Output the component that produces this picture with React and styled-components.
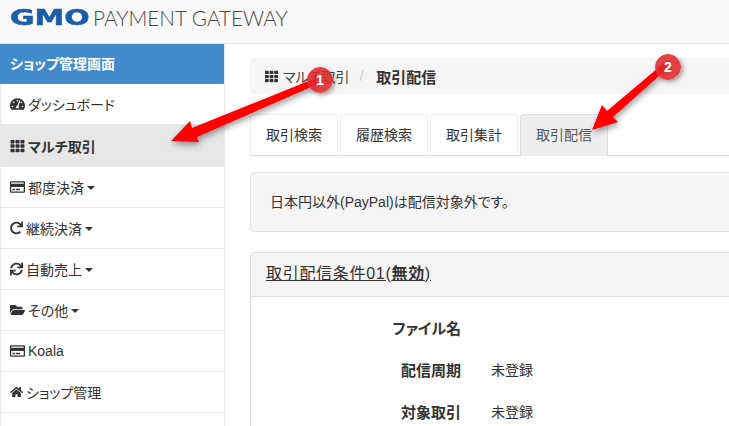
import React from "react";
import styled, { createGlobalStyle } from "styled-components";
import {
  FaTachometerAlt,
  FaTh,
  FaRegCreditCard,
  FaRedo,
  FaSync,
  FaFolderOpen,
  FaHome,
} from "react-icons/fa";

const GlobalStyle = createGlobalStyle`
  html, body {
    margin: 0;
    padding: 0;
    background: #fff;
  }
  body {
    font-family: "Liberation Sans", "Noto Sans CJK JP", sans-serif;
    font-size: 14px;
    color: #333;
    font-feature-settings: "palt";
  }
`;

const Page = styled.div`
  position: relative;
  width: 729px;
  height: 426px;
  overflow: hidden;
`;

const Header = styled.header`
  display: flex;
  align-items: center;
  gap: 4px;
  box-sizing: border-box;
  height: 44px;
  padding: 0 0 7px 10px;
  background: #f8f8f8;
  border-bottom: 1px solid #e7e7e7;
`;

const LogoMark = styled.span`
  display: block;
  flex: none;
  width: 79px;
  font-family: "DejaVu Sans", sans-serif;
  font-weight: 700;
  font-size: 22px;
  line-height: 20px;
  color: #1c5da8;
  transform: scaleX(1.36);
  transform-origin: left center;
  -webkit-text-stroke: 0.5px #1c5da8;
`;

const LogoText = styled.span`
  font-family: "Lato", sans-serif;
  font-weight: 300;
  font-size: 20.7px;
  line-height: 20px;
  color: #4a4a4a;
  white-space: nowrap;
`;

const Body = styled.div`
  display: flex;
`;

const Sidebar = styled.nav`
  flex: none;
  width: 225px;
  box-sizing: border-box;
  border-left: 1px solid #e7e7e7;
  border-right: 1px solid #e7e7e7;
`;

const SideTitle = styled.div`
  box-sizing: border-box;
  height: 40px;
  margin: 0 0 0 -1px;
  padding: 0 0 2px 10px;
  display: flex;
  align-items: center;
  background: #428bca;
  color: #fff;
  font-weight: 700;
`;

const SideItem = styled.div`
  display: flex;
  align-items: center;
  box-sizing: content-box;
  height: ${(p) => (p.$active ? "41px" : "40px")};
  padding-left: 9px;
  gap: 3px;
  border-bottom: 1px solid #e7e7e7;
  background: ${(p) => (p.$active ? "#e7e7e7" : "#fff")};
  font-weight: ${(p) => (p.$active ? 700 : 400)};
  font-size: 14px;
  color: #333;
  white-space: nowrap;

  svg {
    flex: none;
    width: ${(p) => p.$iconWidth}px;
    height: 14px;
  }
`;

const Caret = styled.span`
  display: inline-block;
  margin-top: 2px;
  border-top: 4px solid #333;
  border-left: 4px solid transparent;
  border-right: 4px solid transparent;
`;

const Main = styled.main`
  flex: none;
  width: 540px;
  padding: 14px 0 0 25px;
`;

const Breadcrumb = styled.div`
  display: flex;
  align-items: center;
  height: 36px;
  padding-left: 15px;
  background: #f5f5f5;
  border-radius: 4px;
  color: #444;

  svg {
    width: 13px;
    height: 13px;
    margin-right: 5px;
    color: #333;
  }
`;

const CrumbSep = styled.span`
  margin: 0 13px 0 10px;
  color: #ccc;
`;

const CrumbCurrent = styled.strong`
  color: #333;
  font-size: 15px;
`;

const Tabs = styled.div`
  display: flex;
  gap: 2px;
  margin-top: 20px;
  height: 41px;
  border-bottom: 1px solid #ddd;
`;

const Tab = styled.div`
  display: flex;
  align-items: center;
  box-sizing: border-box;
  height: 42px;
  padding: 0 15px 3px;
  border: 1px solid ${(p) => (p.$active ? "#ddd" : "#eee")};
  border-bottom-color: ${(p) => (p.$active ? "#eee" : "#ddd")};
  border-radius: 4px 4px 0 0;
  background: ${(p) => (p.$active ? "#eee" : "#fff")};
  color: ${(p) => (p.$active ? "#555" : "#333")};
`;

const Well = styled.div`
  display: flex;
  align-items: center;
  box-sizing: border-box;
  height: 60px;
  margin-top: 16px;
  padding: 0 0 3px 19px;
  background: #f5f5f5;
  border: 1px solid #e3e3e3;
  border-radius: 4px;
`;

const Panel = styled.section`
  margin-top: 20px;
  border: 1px solid #ddd;
  border-radius: 4px 4px 0 0;
`;

const PanelHeading = styled.div`
  display: flex;
  align-items: center;
  box-sizing: border-box;
  height: 44px;
  padding: 0 0 6px 15px;
  background: #f5f5f5;
  border-bottom: 1px solid #ddd;
  font-size: 16px;
  letter-spacing: 0.7px;
  text-decoration: underline;
`;

const FormGrid = styled.dl`
  display: grid;
  grid-template-columns: 210px 1fr;
  grid-auto-rows: 42px;
  column-gap: 30px;
  align-items: center;
  margin: 9px 0 0;
`;

const Label = styled.dt`
  font-weight: 700;
  font-size: 15px;
  text-align: right;
`;

const Value = styled.dd`
  margin: 0;
  min-height: 1em;
`;

const Overlay = styled.svg`
  position: absolute;
  left: 0;
  top: 0;
  width: 729px;
  height: 426px;
  overflow: visible;
`;

const Badge = styled.div`
  position: absolute;
  left: ${(p) => p.$x - 13}px;
  top: ${(p) => p.$y - 13}px;
  width: 26px;
  height: 26px;
  display: flex;
  align-items: center;
  justify-content: center;
  border-radius: 50%;
  background: rgba(222, 40, 44, 0.88);
  border: 1px solid #f04040;
  box-sizing: border-box;
  box-shadow: 2px 2px 4px rgba(0, 0, 0, 0.35);
  color: #fff;
  font-weight: 700;
  font-size: 14px;
`;

const navItems = [
  { icon: <FaTachometerAlt />, label: "ダッシュボード", w: 15 },
  { icon: <FaTh />, label: "マルチ取引", w: 15, active: true },
  { icon: <FaRegCreditCard />, label: "都度決済", w: 15, caret: true },
  { icon: <FaRedo />, label: "継続決済", w: 13, caret: true },
  { icon: <FaSync />, label: "自動売上", w: 13, caret: true },
  { icon: <FaFolderOpen />, label: "その他", w: 15, caret: true },
  { icon: <FaRegCreditCard />, label: "Koala", w: 15 },
  { icon: <FaHome />, label: "ショップ管理", w: 13 },
  { icon: null, label: "", w: 15 },
];

const tabs = ["取引検索", "履歴検索", "取引集計", "取引配信"];

const App = () => {
  return (
    <Page>
      <GlobalStyle />
      <Header>
        <LogoMark>GMO</LogoMark>
        <LogoText>PAYMENT GATEWAY</LogoText>
      </Header>
      <Body>
        <Sidebar>
          <SideTitle>ショップ管理画面</SideTitle>
          {navItems.map((item, i) => (
            <SideItem key={i} $active={item.active} $iconWidth={item.w}>
              {item.icon}
              {item.label}
              {item.caret && <Caret />}
            </SideItem>
          ))}
        </Sidebar>
        <Main>
          <Breadcrumb>
            <FaTh />
            マルチ取引
            <CrumbSep>/</CrumbSep>
            <CrumbCurrent>取引配信</CrumbCurrent>
          </Breadcrumb>
          <Tabs>
            {tabs.map((t, i) => (
              <Tab key={t} $active={i === 3}>
                {t}
              </Tab>
            ))}
          </Tabs>
          <Well>日本円以外(PayPal)は配信対象外です。</Well>
          <Panel>
            <PanelHeading>
              <span>
                取引配信条件01(<b>無効</b>)
              </span>
            </PanelHeading>
            <FormGrid>
              <Label>ファイル名</Label>
              <Value />
              <Label>配信周期</Label>
              <Value>未登録</Value>
              <Label>対象取引</Label>
              <Value>未登録</Value>
            </FormGrid>
          </Panel>
        </Main>
      </Body>
      <Overlay viewBox="0 0 729 426">
        <defs>
          <filter id="arrowShadow" x="-20%" y="-20%" width="140%" height="140%">
            <feDropShadow dx="1" dy="3" stdDeviation="3" floodColor="#000" floodOpacity="0.4" />
          </filter>
        </defs>
        <polygon
          points="316,78 318,84 197,137 199,142 171,141 190,121 192,128"
          fill="#fe0000"
          filter="url(#arrowShadow)"
        />
        <polygon
          points="664,63 668,68 613,117 618,122 592,130 602,105 607,111"
          fill="#fe0000"
          filter="url(#arrowShadow)"
        />
      </Overlay>
      <Badge $x={320} $y={80}>1</Badge>
      <Badge $x={668} $y={67}>2</Badge>
    </Page>
  );
};

export default App;
